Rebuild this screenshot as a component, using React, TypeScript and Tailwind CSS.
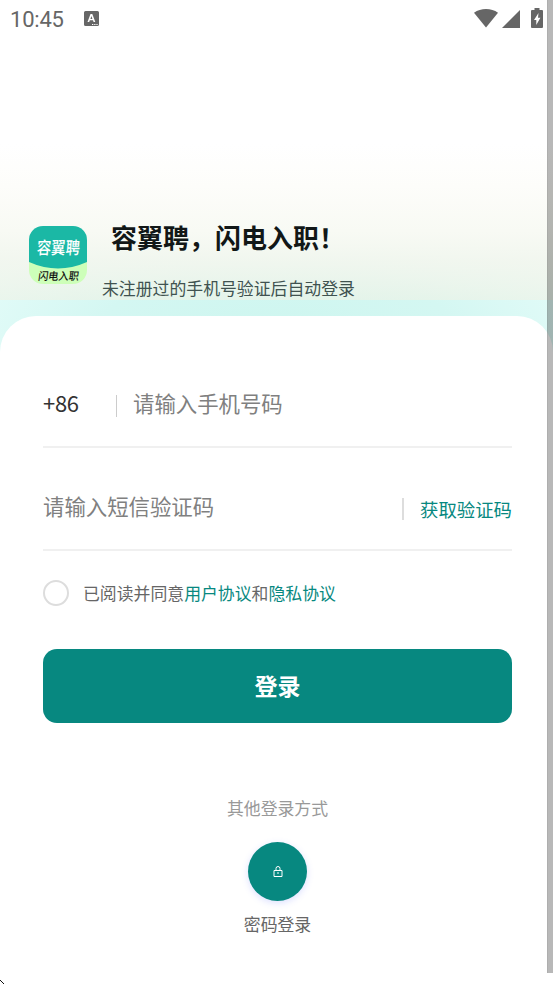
import { useState } from 'react'
import { clsx } from 'clsx'

function StatusBar() {
  return (
    <div className="flex h-[38px] items-center pl-[10px] pr-[10px] text-[#666]">
      <span className="pt-px font-[Roboto] text-[22px] leading-[38px] tracking-[-0.2px]">10:45</span>
      <svg className="-mt-px ml-5" width="15" height="15" viewBox="0 0 15 15" fill="currentColor">
        <path
          fillRule="evenodd"
          d="M1.500 0h12A1.500 1.500 0 0 1 15 1.500v12a1.500 1.500 0 0 1-1.500 1.500h-12A1.500 1.500 0 0 1 0 13.500v-12A1.500 1.500 0 0 1 1.500 0zM6.500 3 3.500 11h1.700l.6-1.700h3.200l.6 1.700h1.700L8.300 3zm.9 2 1 3H6.400zM8 13v1h1.300v-1zm2.200 0v1h1.300v-1zm2.200 0v1h1.200v-1z"
        />
      </svg>
      <div className="flex-1" />
      <svg className="-mt-px" width="24" height="19" viewBox="0 0 24 19" fill="currentColor">
        <path d="M12 18.500 0 3.700C3.500 1.200 7.500 0 12 0s8.500 1.200 12 3.700z" />
      </svg>
      <svg className="ml-1" width="18" height="18" viewBox="0 0 18 18" fill="currentColor">
        <path d="M18 0v18H0z" />
      </svg>
      <svg className="-mt-0.5 ml-[11px]" width="12" height="20" viewBox="0 0 12 20" fill="currentColor">
        <path fillRule="evenodd" d="M3.500 0h5v2H11a1 1 0 0 1 1 1v16a1 1 0 0 1-1 1H1a1 1 0 0 1-1-1V3a1 1 0 0 1 1-1h2.500zM7.500 5 3 12h2.300v5L9.400 9.800H7z" />
      </svg>
    </div>
  )
}

function Logo() {
  return (
    <svg className="overflow-visible" width="58" height="58" viewBox="0 0 58 58">
      <path d="M0 30h58v14a14 14 0 0 1-14 14H14A14 14 0 0 1 0 44z" fill="#cdffb9" />
      <path d="M14 0h30a14 14 0 0 1 14 14v22q-29 13-58 0V14A14 14 0 0 1 14 0z" fill="#1bb8a5" />
      <text textAnchor="middle" fontSize="14.300" fontWeight="500" fill="#fff" transform="translate(29 28) skewX(-4) scale(1 1.200)">
        容翼聘
      </text>
      <text textAnchor="middle" fontSize="10.200" fontWeight="500" fill="#111" transform="translate(29 54) skewX(-8) scale(1 1.060)">
        闪电入职
      </text>
    </svg>
  )
}

function LockIcon() {
  return (
    <svg className="-mt-px" width="10" height="11" viewBox="0 0 10 11" fill="none" stroke="#fff" strokeWidth="1">
      <path d="M1 4.500h8v6H1zM3 4.500V2.500a2 2 0 0 1 4 0v2M5 6v2" />
    </svg>
  )
}

export default function App() {
  const [phone, setPhone] = useState('')
  const [code, setCode] = useState('')
  const [agreed, setAgreed] = useState(false)

  return (
    <div className="relative h-[984px] w-full overflow-hidden bg-white font-['Noto_Sans_CJK_SC',sans-serif]">
      {/* Tinted backdrop */}
      <div className="absolute inset-x-0 top-0 h-[360px] bg-[radial-gradient(ellipse_330px_130px_at_50%_94%,#cdf6ef_0%,#d4f7f2_55%,#e4fcf9_100%)]" />
      <div className="absolute inset-x-0 top-0 h-[300px] bg-[linear-gradient(to_bottom,#fff_0%,#fff_48%,#fdfdfa_62%,#f8faf4_77%,rgba(243,246,238,0.900)_87%,rgba(240,242,229,0.600)_100%)]" />

      <div className="relative flex h-full flex-col">
        <header className="h-[316px] shrink-0">
          <StatusBar />
          <div className="mt-[179px] flex pl-[29px]">
            <div className="mt-[9px]">
              <Logo />
            </div>
            <div className="ml-[15px]">
              <h1 className="pl-[9px] text-[26px] font-bold leading-10 text-[#111717]">容翼聘，闪电入职！</h1>
              <p className="mt-[19px] text-[16.870px] leading-6 text-[#405250]">未注册过的手机号验证后自动登录</p>
            </div>
          </div>
        </header>

        <main className="flex-1 rounded-t-[36px] bg-white pl-[43px] pr-[41px] pt-[46px]">
          <div className="flex h-[86px] items-center border-b-2 border-[#f0f0f0]">
            <span className="-mt-1 w-[73px] text-[22px] tracking-[-0.3px] text-[#333]">+86</span>
            <span className="mt-[3px] h-[22px] w-px bg-[#ccc]" />
            <input
              className="-mt-0.5 ml-4 min-w-0 flex-1 text-[21.400px] outline-none placeholder:text-[#808080]"
              placeholder="请输入手机号码"
              value={phone}
              onChange={(e) => setPhone(e.target.value)}
            />
          </div>

          <div className="mt-[17px] flex h-[86px] items-center border-b-2 border-[#f0f0f0]">
            <input
              className="-mt-0.5 min-w-0 flex-1 text-[21.400px] outline-none placeholder:text-[#808080]"
              placeholder="请输入短信验证码"
              value={code}
              onChange={(e) => setCode(e.target.value)}
            />
            <span className="mt-[3px] h-[22px] w-[2px] bg-[#ddd]" />
            <button className="ml-4 mt-[5px] text-[18.400px] text-[#078880]">获取验证码</button>
          </div>

          <div className="mt-[29px] flex h-[26px] items-center">
            <button
              className={clsx('size-[26px] rounded-full border-2 border-[#ddd]', agreed && 'bg-[#078880]')}
              onClick={() => setAgreed(!agreed)}
            />
            <p className="ml-[14px] text-[16.870px] text-[#666]">
              已阅读并同意<span className="text-[#078880]">用户协议</span>和<span className="text-[#078880]">隐私协议</span>
            </p>
          </div>

          <button className="mt-[43px] h-[74px] w-full rounded-[14px] bg-[#078880] pb-0.5 text-[23px] font-bold text-white">
            登录
          </button>

          <div className="mt-[73px] flex flex-col items-center">
            <span className="text-[16.870px] leading-6 text-[#999]">其他登录方式</span>
            <button className="mt-[22px] flex size-[59px] items-center justify-center rounded-full bg-[#078880] shadow-[0_2px_7px_rgba(80,100,255,0.200)]">
              <LockIcon />
            </button>
            <span className="mt-[11px] text-[16.870px] leading-6 text-[#666]">密码登录</span>
          </div>
        </main>
      </div>

      {/* Scroll track */}
      <div className="absolute right-0 top-0 h-[973px] w-[6px] border-l border-black/5 bg-black/28" />

      {/* Pointer tip at the window edge */}
      <svg className="absolute bottom-0 left-0" width="4" height="4" viewBox="0 0 4 4">
        <path d="M0 0h1v1h1v1h1v1h1v1H3V3H2V2H1V1H0z" fill="#111" />
      </svg>
    </div>
  )
}
